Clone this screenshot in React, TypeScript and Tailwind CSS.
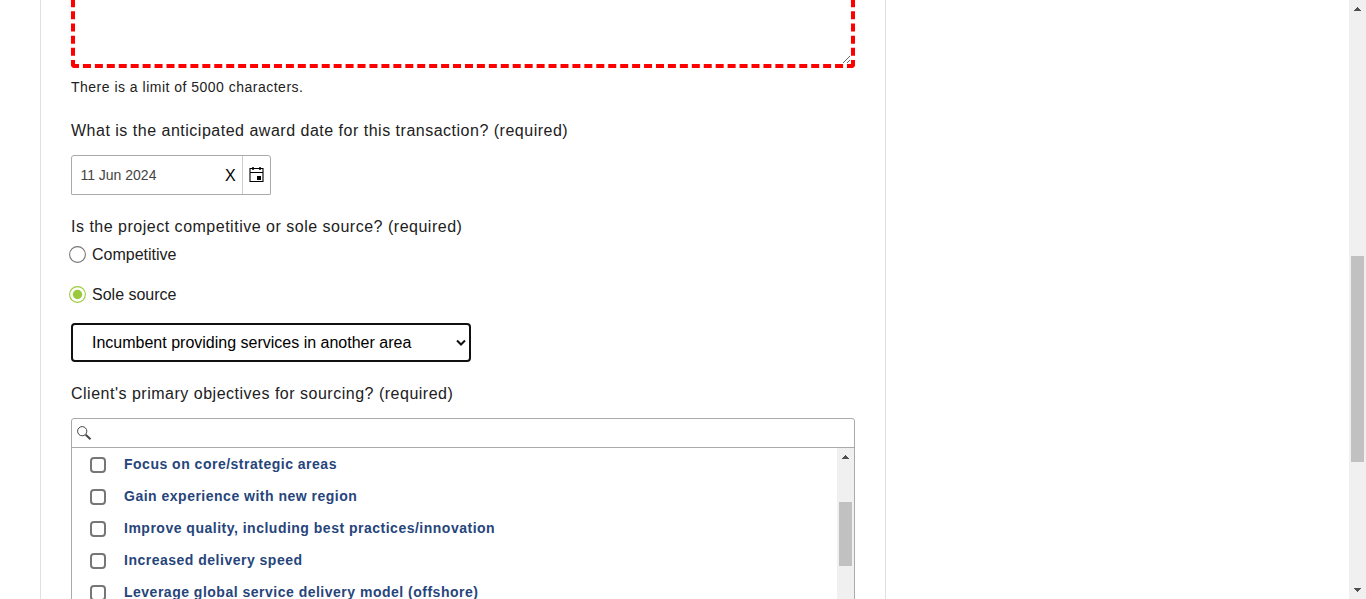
import React from "react";

const objectives = [
  "Focus on core/strategic areas",
  "Gain experience with new region",
  "Improve quality, including best practices/innovation",
  "Increased delivery speed",
  "Leverage global service delivery model (offshore)",
];

function Arrow({ down = false }: { down?: boolean }) {
  return (
    <svg width="7" height="4" viewBox="0 0 7 4" shapeRendering="crispEdges" className={down ? "rotate-180" : ""}>
      <path d="M3 0h1v1h1v1h1v1h1v1H0V3h1V2h1V1h1z" fill="#505050" />
    </svg>
  );
}

function Label({ children }: { children: React.ReactNode }) {
  return <p className="h-6 text-base leading-6 tracking-[0.505px] whitespace-nowrap text-[#212121]">{children}</p>;
}

function DateField() {
  return (
    <div className="mt-3 flex h-10 w-[200px] rounded-t-[3px] rounded-b-[1px] border border-[#aaa]">
      <span className="w-[149px] pl-[8.4px] text-sm leading-[38px] text-[#444]">11 Jun 2024</span>
      <button className="w-[21px] pt-px pl-[4px] text-left text-base leading-[38px] text-black">X</button>
      <button className="flex w-7 items-center justify-center border-l border-[#ccc]">
        <svg width="15" height="16" viewBox="0 0 15 16" fill="none" stroke="#000" className="-mt-0.5">
          <path d="M1 2.5h13v13H1zM1 6.5h13" strokeWidth="1.1" />
          <path d="M4 1v3M11 1v3" strokeWidth="1.5" />
          <path d="M8 10h4v4H8z" fill="#000" stroke="none" />
        </svg>
      </button>
    </div>
  );
}

function Radio({ label, checked = false }: { label: string; checked?: boolean }) {
  return (
    <label className="-ml-0.5 flex h-6 items-center whitespace-nowrap text-base leading-6 text-[#212121]">
      <svg width="17" height="17" viewBox="0 0 17 17" fill="none" className="mb-px">
        <circle cx="8.5" cy="8.5" r="7.9" stroke={checked ? "#9aca3c" : "#767676"} strokeWidth="1.1" />
        {checked && <circle cx="8.5" cy="8.5" r="4.7" fill="#9aca3c" />}
      </svg>
      <span className="ml-1.5">{label}</span>
    </label>
  );
}

export default function App() {
  return (
    <div className="flex h-[599px] overflow-hidden bg-white font-['Liberation_Sans',Arial,sans-serif]">
      <main className="ml-10 h-[599px] w-[846px] shrink-0 overflow-hidden border-x border-[#e0e0e4] px-[30px]">
        <textarea className="-mt-[86px] block h-[154px] w-[784px] resize rounded-[4px] border-4 border-dashed border-[#f00] outline-none" />
        <p className="mt-[9px] h-5 text-sm leading-5 tracking-[0.49px] text-[#212121]">There is a limit of 5000 characters.</p>
        <div className="mt-[22px]">
          <Label>What is the anticipated award date for this transaction? (required)</Label>
          <DateField />
        </div>
        <div className="mt-5">
          <Label>Is the project competitive or sole source? (required)</Label>
          <div className="mt-1 flex flex-col gap-4">
            <Radio label="Competitive" />
            <Radio label="Sole source" checked />
          </div>
        </div>
        <div className="mt-4 flex h-[39px] w-[400px] items-center justify-between rounded-[4px] border-2 border-[#101010] pl-[19px] pr-[3px] text-base text-black">
          <span>Incumbent providing services in another area</span>
          <svg width="10" height="8" viewBox="0 0 10 8" fill="none" stroke="#101010" strokeWidth="2">
            <path d="M1 1.5 5 5.5 9 1.5" />
          </svg>
        </div>
        <div className="mt-5">
          <Label>Client&apos;s primary objectives for sourcing? (required)</Label>
          <div className="mt-3 w-[784px] rounded-t-[3px] border border-[#aaa]">
            <div className="flex h-[29px] items-center border-b border-[#aaa] pl-[5px]">
              <svg width="15" height="15" viewBox="0 0 15 15" fill="none" stroke="#444">
                <circle cx="5.2" cy="5.2" r="4.6" />
                <path d="M8.7 8.7 13.5 13.3" strokeWidth="2" />
              </svg>
            </div>
            <div className="flex h-[200px] justify-between">
              <ul>
                {objectives.map((o) => (
                  <li key={o} className="flex h-8 items-center pl-[18px]">
                    <span className="mt-px size-4 rounded-[4px] border-2 border-[#767676]" />
                    <span className="ml-[18px] whitespace-nowrap text-sm font-bold tracking-[0.5px] text-[#26457a]">{o}</span>
                  </li>
                ))}
              </ul>
              <div className="flex w-[17px] flex-col items-center bg-[#f0f0f0] pt-[7px]">
                <Arrow />
                <div className="mt-[43px] -ml-px h-16 w-[13px] bg-[#c1c1c1]" />
              </div>
            </div>
          </div>
        </div>
      </main>
      <aside className="ml-auto flex w-[17px] flex-col items-center bg-[#f0f0f0] pt-[7px] pb-[7px]">
        <Arrow />
        <div className="mt-[245px] -ml-px h-[206px] w-[13px] bg-[#c1c1c1]" />
        <div className="mt-auto"><Arrow down /></div>
      </aside>
    </div>
  );
}
